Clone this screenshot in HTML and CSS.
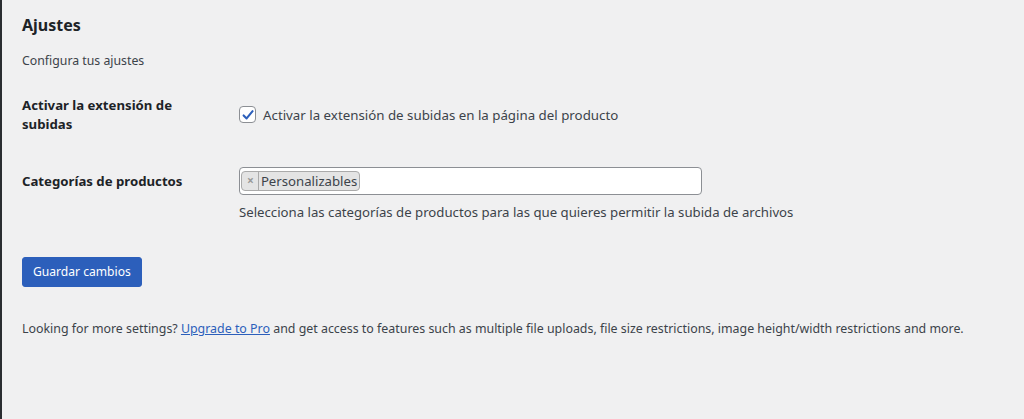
FILE: index.html
```html
<!DOCTYPE html>
<html lang="es">
<head>
<meta charset="utf-8">
<title>Ajustes</title>
<link rel="stylesheet" href="styles.css">
</head>
<body>
<div class="admin">
  <div class="menu-edge"></div>
  <main class="wrap">
    <h2 class="title">Ajustes</h2>
    <p class="intro">Configura tus ajustes</p>
    <form class="form">
      <div class="row row-check">
        <div class="label">Activar la extensión de subidas</div>
        <div class="field">
          <label class="check">
            <span class="box"><svg viewBox="0 0 16 16" width="16" height="16"><path d="M3.6 8.4 L6.6 11.4 L12.6 4.2" fill="none" stroke="#2c5fbb" stroke-width="2.1" stroke-linecap="round" stroke-linejoin="round"/></svg></span>
            <span>Activar la extensión de subidas en la página del producto</span>
          </label>
        </div>
      </div>
      <div class="row row-select">
        <div class="label">Categorías de productos</div>
        <div class="field">
          <div class="select">
            <span class="tag"><span class="tag-x">×</span><span class="tag-text">Personalizables</span></span>
          </div>
          <p class="desc">Selecciona las categorías de productos para las que quieres permitir la subida de archivos</p>
        </div>
      </div>
      <div class="actions">
        <button type="button" class="btn">Guardar cambios</button>
      </div>
    </form>
    <p class="footer">Looking for more settings? <a href="#">Upgrade to Pro</a> and get access to features such as multiple file uploads, file size restrictions, image height/width restrictions and more.</p>
  </main>
</div>
</body>
</html>
```

FILE: styles.css
```css
html, body {
  margin: 0;
  padding: 0;
  height: 100%;
}
body {
  background: #f0f0f1;
  color: #3c434a;
  font-family: "Noto Sans", "Open Sans", sans-serif;
  font-size: 13px;
  line-height: 1.4;
}
.admin {
  display: flex;
  min-height: 100%;
}
.menu-edge {
  width: 2px;
  background: #2a2d31;
  flex: 0 0 2px;
}
.wrap {
  flex: 1;
  padding: 0 20px;
}
.title {
  margin: 14px 0 0;
  font-size: 16px;
  font-weight: 700;
  color: #1d2327;
  line-height: 1.4;
}
.intro {
  margin: 16px 0 0;
  font-size: 12.3px;
}
.form {
  margin-top: 26px;
}
.row {
  display: grid;
  grid-template-columns: 217px 1fr;
}
.label {
  font-size: 13.2px;
  font-weight: 700;
  color: #1d2327;
  line-height: 19px;
  width: 180px;
}
.row-check {
  height: 71px;
}
.check {
  display: flex;
  align-items: center;
  gap: 7px;
  font-size: 13.3px;
  margin-top: 10px;
}
.box {
  width: 17px;
  height: 17px;
  border: 1px solid #8c8f94;
  border-radius: 4px;
  background: #fff;
  box-sizing: border-box;
  display: flex;
  align-items: center;
  justify-content: center;
}
.box svg {
  display: block;
  flex: 0 0 auto;
}
.row-select .label {
  padding-top: 5px;
}
.select {
  width: 463px;
  height: 28px;
  box-sizing: border-box;
  border: 1px solid #8c8f94;
  border-radius: 4px;
  background: #fff;
  display: flex;
  align-items: center;
  padding: 0 1px;
}
.tag {
  display: inline-flex;
  align-items: stretch;
  height: 20px;
  border: 1px solid #aaa;
  border-radius: 4px;
  background: #e4e4e4;
  box-sizing: border-box;
}
.tag-x {
  color: #999;
  font-size: 12px;
  font-weight: 700;
  padding: 0 4px 0 5px;
  border-right: 1px solid #aaa;
  line-height: 18px;
}
.tag-text {
  padding: 0 2px 0 2px;
  font-size: 13.2px;
  line-height: 18px;
  color: #3c434a;
}
.desc {
  margin: 8px 0 0;
  font-size: 13.2px;
}
.actions {
  margin-top: 36px;
}
.btn {
  font-family: inherit;
  font-size: 12.1px;
  color: #fff;
  background: #2c5fbb;
  border: 1px solid #2c5fbb;
  border-radius: 3px;
  height: 30px;
  padding: 0 10px;
  line-height: 28px;
}
.footer {
  margin: 33px 0 0;
  font-size: 12.4px;
}
.footer a {
  color: #2c5fbb;
  text-decoration: underline;
}
```
